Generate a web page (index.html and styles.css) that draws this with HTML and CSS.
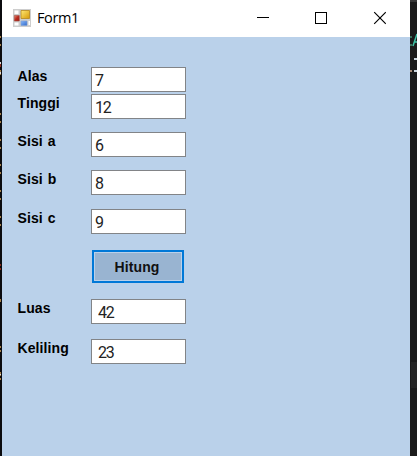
FILE: index.html
```html
<!DOCTYPE html>
<html lang="id">
<head>
<meta charset="utf-8">
<title>Form1</title>
<link rel="stylesheet" href="styles.css">
</head>
<body>
<div class="desktop">
  <svg class="edge" width="2" height="456" shape-rendering="crispEdges" aria-hidden="true">
    <path fill="#a8824b" d="M0 36h1v2H0zM0 44h1v2H0zM0 70h1v5H0zM0 113h1v2H0zM0 121h1v2H0zM0 139h1v2H0zM0 147h1v2H0zM0 164h1v2H0zM0 172h1v2H0zM0 190h1v2H0zM0 198h1v2H0zM0 216h1v2H0zM0 224h1v2H0zM0 299h1v3H0zM0 346h1v2H0zM0 350h1v2H0zM0 372h1v4H0zM0 378h1v2H0z"/>
    <path fill="#ddd" d="M0 62h1v2H0zM0 72h1v2H0zM0 374h1v1H0z"/>
    <path fill="#8a2b1b" d="M0 64h1v3H0zM0 264h1v2H0zM0 268h1v2H0z"/>
  </svg>
  <main class="window">
    <header class="titlebar">
      <svg class="app-icon" width="18" height="18" viewBox="0 0 18 18" aria-hidden="true">
        <defs>
          <linearGradient id="gold" x2="1" y2="1"><stop stop-color="#ffe875"/><stop offset="1" stop-color="#d79a08"/></linearGradient>
          <linearGradient id="red" x2="1" y2="1"><stop stop-color="#e78b78"/><stop offset=".5" stop-color="#b92a1e"/><stop offset="1" stop-color="#9a1710"/></linearGradient>
          <linearGradient id="blue" x2="1" y2="1"><stop stop-color="#88b8fa"/><stop offset="1" stop-color="#326acb"/></linearGradient>
        </defs>
        <path fill="#cdcdcd" d="M0 0h18v18H0z"/>
        <path fill="#fff" d="M1.500 1.500h4v3.500h-4zM1.500 13.500h4v3h-4zM15.500 12h1.500v4h-1.500z"/>
        <path fill="url(#gold)" stroke="#b8881c" stroke-width=".8" d="M8 1.500h8.500v8H8z"/>
        <path fill="url(#red)" stroke="#a55045" stroke-width=".6" d="M1.300 6.500h5v5.500h-5z"/>
        <path fill="url(#blue)" stroke="#7c9fd5" stroke-width=".6" d="M8 12h6v4.500H8z"/>
      </svg>
      <h1 class="title">Form1</h1>
      <svg class="controls" width="130" height="14" viewBox="0 0 130 14" fill="none" stroke="#000" aria-hidden="true">
        <path d="M1 6.500h12M59.500 1.500h11v11h-11z" shape-rendering="crispEdges"/>
        <path d="M118.200 1.200l11.600 11.600M129.800 1.200l-11.600 11.600" stroke-width="1.150"/>
      </svg>
    </header>
    <form class="form">
      <div class="row"><label for="alas">Alas</label><input id="alas" value="7"></div>
      <div class="row row-tight"><label for="tinggi">Tinggi</label><input id="tinggi" value="12"></div>
      <div class="row"><label for="a">Sisi a</label><input id="a" value="6"></div>
      <div class="row row-side"><label for="b">Sisi b</label><input id="b" value="8"></div>
      <div class="row row-side"><label for="c">Sisi c</label><input id="c" value="9"></div>
      <button class="calculate" type="button">Hitung</button>
      <div class="row row-result"><label for="luas">Luas</label><input id="luas" value="42"></div>
      <div class="row row-result"><label for="keliling">Keliling</label><input id="keliling" value="23"></div>
    </form>
  </main>
  <aside class="editor" aria-hidden="true">
    <svg width="7" height="456" shape-rendering="crispEdges">
      <path fill="#373737" d="M0 0h7v2H0z"/>
      <path fill="#252525" d="M1 362h6v26H1z"/>
      <path fill="#38705b" d="M0 36h2v2H0zM0 44h2v2H0z"/>
      <path fill="none" stroke="#3fc2a5" stroke-width="1.500" shape-rendering="auto" d="M3 46L7 34M4 42h3"/>
      <path fill="#c9d4dc" d="M4 58h3v2H4zM4 70h3v2H4z"/>
      <path fill="#a68a77" d="M0 70h2v2H0z"/>
    </svg>
  </aside>
</div>
</body>
</html>
```

FILE: styles.css
```css
* {
  box-sizing: border-box;
}

body {
  margin: 0;
  overflow: hidden;
  font-family: "Liberation Sans", Arial, sans-serif;
}

.desktop {
  display: flex;
  width: 417px;
  height: 456px;
  background: #1b1b1b;
}

.edge {
  flex: none;
  background: #0b0b0e;
}

.window {
  width: 408px;
  background: #bad1ea;
}

.editor svg {
  display: block;
}

.titlebar {
  display: flex;
  align-items: center;
  height: 37px;
  padding: 0 24px 2px 11px;
  background: #fff;
}

.title {
  margin: 0 0 0 6px;
  font: 400 14.500px/20px "Open Sans", "Noto Sans", sans-serif;
  letter-spacing: -0.400px;
}

.controls {
  margin-left: auto;
}

.form {
  display: flex;
  flex-direction: column;
  padding: 30px 0 0 15px;
}

.row {
  display: flex;
  height: 25px;
  margin-bottom: 13px;
}

.row:first-child {
  margin-bottom: 2px;
}

.row-side {
  margin-bottom: 14px;
}

.row label {
  width: 74px;
  padding-left: 0.500px;
  font-size: 14px;
  font-weight: 700;
  line-height: 18px;
  letter-spacing: 0.100px;
  word-spacing: 1px;
}

.row input {
  width: 95px;
  height: 25px;
  padding: 1px 3px 0;
  border: 1px solid #828487;
  border-radius: 0;
  outline: 0;
  background: #fff;
  color: #222;
  font: 16px/22px Roboto, "Liberation Sans", sans-serif;
  letter-spacing: -1.200px;
}

.calculate {
  width: 92px;
  height: 33px;
  margin: 2px 0 16px 75px;
  padding: 0 2px 0 0;
  border: 2px solid #0078d7;
  box-shadow: inset 0 0 0 1px #bad1ea;
  background: #99b4d1;
  color: #111;
  font: 700 14px/20px "Liberation Sans", Arial, sans-serif;
  letter-spacing: 0.100px;
}

.row-result {
  margin-bottom: 15px;
}

.row-result input {
  padding-left: 6px;
}
```
